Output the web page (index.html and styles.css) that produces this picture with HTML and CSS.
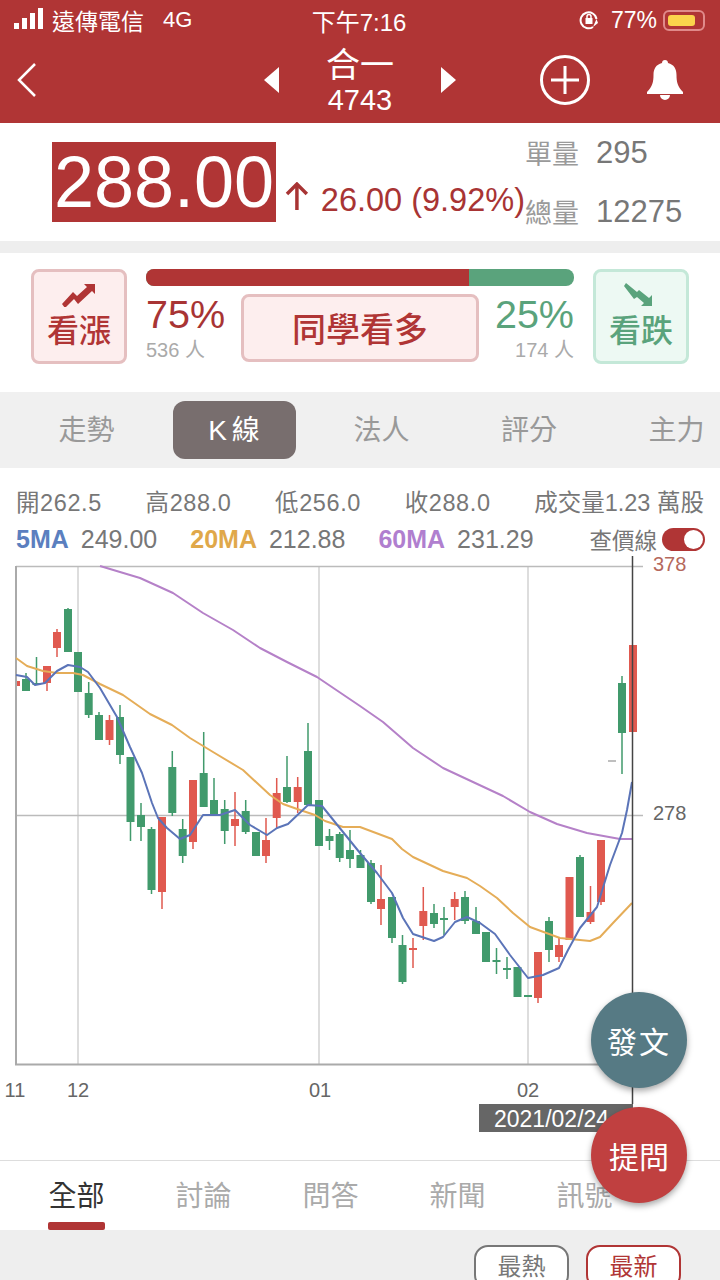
FILE: index.html
```html
<!DOCTYPE html>
<html lang="zh-Hant">
<head>
    <meta charset="UTF-8">
    <meta name="viewport" content="width=device-width, initial-scale=1.0">
    <title>合一 4743</title>
    <link rel="stylesheet" href="styles.css">
</head>
<body>
<div class="page">
    <header class="header">
        <div class="status-bar">
            <div class="status-left">
                <svg class="signal" width="32" height="22" viewBox="0 0 32 22"><path d="M1 15h5v6H1zM9 10h5v11H9zM17 5h5v16h-5zM25 0h5v21h-5z" fill="#fff"/></svg>
                <span class="carrier">遠傳電信</span>
                <span class="network">4G</span>
            </div>
            <div class="status-time">下午7:16</div>
            <div class="status-right">
                <svg width="20" height="22" viewBox="0 0 20 22" fill="none" stroke="#fff" stroke-width="2"><path d="M14 18a8 8 0 1 1 3.500-8"/><rect x="6.500" y="9" width="7" height="6" fill="#fff" stroke="none"/><path d="M8 9V7.500a2 2 0 0 1 4 0V9" stroke-width="1.500"/><path d="M14 18l3.500-8 1.500 4" stroke="none" fill="#fff"/></svg>
                <span class="battery-text">77%</span>
                <div class="battery"><div class="battery-fill"></div></div>
            </div>
        </div>
        <nav class="nav">
            <svg class="back" width="20" height="34" viewBox="0 0 20 34" fill="none" stroke="#fff" stroke-width="2.500"><path d="M18 1L2 17l16 16"/></svg>
            <div class="stock-switch">
                <svg width="17" height="26" viewBox="0 0 17 26"><path d="M16 0v26L1 13z" fill="#fff"/></svg>
                <div class="stock-name">
                    <div class="stock-title">合一</div>
                    <div class="stock-code">4743</div>
                </div>
                <svg width="17" height="26" viewBox="0 0 17 26"><path d="M1 0v26l15-13z" fill="#fff"/></svg>
            </div>
            <div class="nav-actions">
                <svg width="50" height="50" viewBox="0 0 50 50" fill="none" stroke="#fff"><circle cx="25" cy="25" r="23.500" stroke-width="3"/><path d="M25 11v28M11 25h28" stroke-width="3"/></svg>
                <svg width="38" height="40" viewBox="0 0 38 40"><path d="M19 0c1.800 0 3 1.200 3 3 6 1.500 8.500 6 8.500 12 0 7 1 11.500 6.500 17v2H1v-2c5.500-5.500 6.500-10 6.500-17 0-6 2.500-10.500 8.500-12 0-1.800 1.200-3 3-3zM14 35h10a5 5 0 0 1-10 0z" fill="#fff"/></svg>
            </div>
        </nav>
    </header>

    <section class="quote">
        <div class="price">288.00</div>
        <div class="change">
            <svg class="change-arrow" width="24" height="28" viewBox="0 0 24 28" fill="none" stroke="#a83434" stroke-width="3.500"><path d="M12 28V3M2 12l10-10 10 10"/></svg>
            <span>26.00 (9.92%)</span>
        </div>
        <div class="volumes">
            <div class="volume-row"><span class="volume-label">單量</span><span class="volume-value">295</span></div>
            <div class="volume-row"><span class="volume-label">總量</span><span class="volume-value">12275</span></div>
        </div>
    </section>

    <div class="divider"></div>

    <section class="sentiment">
        <button class="vote vote-up">
            <svg width="36" height="24" viewBox="0 0 36 24"><path d="M1 21l11-12 4 4 10-9-3-3h11v10l-3-3-14 13-4-5-9 9z" fill="#b03535"/></svg>
            <span>看漲</span>
        </button>
        <div class="sentiment-mid">
            <div class="ratio-bar"><div class="ratio-up"></div></div>
            <div class="sentiment-row">
                <div class="percent">
                    <div class="percent-num up">75%</div>
                    <div class="percent-people">536 人</div>
                </div>
                <div class="verdict">同學看多</div>
                <div class="percent percent-right">
                    <div class="percent-num down">25%</div>
                    <div class="percent-people">174 人</div>
                </div>
            </div>
        </div>
        <button class="vote vote-down">
            <svg width="36" height="24" viewBox="0 0 36 24"><path d="M3 0l11 9 2-2 10 8 3-3v11H18l3-3-7-6-3 2L1 3z" fill="#5aa37c"/></svg>
            <span>看跌</span>
        </button>
    </section>

    <div class="chart-tabs">
        <div class="chart-tab">走勢</div>
        <div class="chart-tab active">K 線</div>
        <div class="chart-tab">法人</div>
        <div class="chart-tab">評分</div>
        <div class="chart-tab">主力</div>
    </div>

    <section class="chart-info">
        <div class="ohlc">
            <span>開262.5</span>
            <span>高288.0</span>
            <span>低256.0</span>
            <span>收288.0</span>
            <span>成交量1.23 萬股</span>
        </div>
        <div class="ma-row">
            <b class="ma5">5MA</b><span class="ma-value">249.00</span>
            <b class="ma20">20MA</b><span class="ma-value">212.88</span>
            <b class="ma60">60MA</b><span class="ma-value">231.29</span>
            <span class="crosshair-label">查價線</span>
            <div class="toggle"><div class="toggle-knob"></div></div>
        </div>
    </section>

    <svg class="chart" width="720" height="604" viewBox="0 556 720 604">
        <!-- grid -->
        <path class="grid-v" d="M78 566V1065M319 566V1065M528 566V1065"/>
        <path class="grid-h" d="M16 566.500H643M16 815.500H643"/>
        <path class="axis" d="M16 566V1065M15 1064.500H632"/>

        <!-- candles: wicks, then bodies drawn as wide strokes -->
        <path class="wick green" d="M26 673V691M36.500 657V685M68 608V652M78 652V692M88.700 682V718M99 712V740M120 705V764M130.500 757V841M141 803V841M151.500 827V894M172.300 751V816M182.700 819V863M203.700 732V807M214 778V814M224.700 800V844M245.700 800V834M287 756V803M308 723V805M319 800V846M329.500 829V850M339.700 832V862M350 830V868M360.500 850V868M371 860V904M392 897V943M402.500 935V984M434 904V928M444 907V935M465 891V924M476 907V934M496.500 948V974M507 957V979M549 917V962M580 855V917M622 676V774"/>
        <path class="wick red" d="M47 666V691M57 629V657M109.500 715V745M162 817V909M193 780V849M235 792V846M266 818V863M276.700 778V828M297.700 777V813M381 865V925M413 938V968M423.300 887V940M454.700 892V920M538 952V1003M559 938V962M590.500 886V924M601 840V905"/>
        <path class="body green" d="M26 679V691M36.500 683V685M68 609V652M78 652V692M88.700 693V715M99 715V740M120 717V755M130.500 757V822M141 815V827M151.500 829V890M172.300 767V813M182.700 829V856M203.700 773V807M214 800V814M224.700 809V831M245.700 811V832M256 832V856M287 787V802M308 751V805M319 800V846M329.500 836V841M339.700 834V858M350 850V859M360.500 855V868M371 863V902M392 897V938M402.500 945V982M434 913V924M444 918V920M465 897V921M476 921V934M486 932V962M496.500 960V962M507 968V970M517.500 967V997M528 995V997M549 921V950M580 857V917M622 683V733"/>
        <path class="body red" d="M47 666V683M57 632V648M109.500 720V740M162 817V892M193 780V842M235 819V826M266 840V856M276.700 793V818M297.700 787V802M381 899V909M413 948V950M423.300 911V926M454.700 899V907M538 952V998M559 945V957M569.500 877V940M590.500 912V922M601 840V902M633 645V732"/>
        <rect class="candle-stub" x="17" y="681" width="3" height="5"/>
        <path class="body doji" d="M608 761H616"/>

        <!-- moving averages -->
        <polyline class="ma-line line-60" points="100,566 140,578 173,593 203,613 233,630 260,648 287,662 317,677 360,706 383,722 413,748 443,768 473,782 503,796 530,812 557,824 587,833 620,839 632,839"/>
        <polyline class="ma-line line-20" points="16,658 27,666 43,671 57,673 73,673 83,675 100,684 123,695 150,714 172,725 190,738 213,752 243,770 270,795 283,804 300,810 315,815 325,821 343,827 360,827 392,839 402,849 413,857 443,871 467,878 480,886 497,898 513,913 530,927 560,938 590,941 600,937 613,923 632,903"/>
        <polyline class="ma-line line-5" points="16,675 27,677 35,685 45,683 57,671 68,665 80,667 88,672 100,688 117,717 130,747 142,773 152,803 158,818 167,828 180,839 190,835 203,815 220,815 235,810 250,825 267,835 277,828 288,824 308,805 322,806 343,832 360,853 377,873 392,893 403,918 413,934 434,941 443,937 455,922 467,917 480,923 495,934 510,955 528,978 543,975 559,968 568,950 580,928 597,907 610,865 622,833 627,810 632,782"/>

        <!-- crosshair -->
        <path class="crosshair" d="M632.500 556V1104"/>
        <text class="axis-label high" x="653" y="571">378</text>
        <text class="axis-label" x="653" y="820">278</text>
        <text class="axis-label" x="15" y="1097" text-anchor="middle">11</text>
        <text class="axis-label" x="78" y="1097" text-anchor="middle">12</text>
        <text class="axis-label" x="320" y="1097" text-anchor="middle">01</text>
        <text class="axis-label" x="528" y="1097" text-anchor="middle">02</text>
        <rect class="date-box" x="479" y="1104" width="154" height="28"/>
        <text class="date-text" x="494" y="1127">2021/02/24</text>
    </svg>

    <div class="feed-tabs">
        <div class="feed-tab active">全部</div>
        <div class="feed-tab">討論</div>
        <div class="feed-tab">問答</div>
        <div class="feed-tab">新聞</div>
        <div class="feed-tab">訊號</div>
    </div>

    <div class="feed-sort">
        <button class="sort-btn">最熱</button>
        <button class="sort-btn selected">最新</button>
    </div>

    <button class="fab fab-post">發文</button>
    <button class="fab fab-ask">提問</button>
</div>
</body>
</html>
```

FILE: styles.css
```css
* {
    box-sizing: border-box;
    margin: 0;
    padding: 0;
}

body {
    font-family: "Liberation Sans", "Noto Sans CJK TC", sans-serif;
    background: #fff;
}

button {
    font-family: inherit;
    cursor: pointer;
}

.page {
    position: relative;
    width: 720px;
    height: 1280px;
    overflow: hidden;
}

/* header */
.header {
    height: 123px;
    background: #b03535;
    color: #fff;
}

.status-bar {
    display: grid;
    grid-template-columns: 1fr auto 1fr;
    align-items: center;
    height: 40px;
    padding: 0 15px 0 13px;
    font-size: 23px;
}

.status-left {
    display: flex;
    align-items: center;
}

.signal {
    margin-right: 7px;
    margin-top: -3px;
}

.network {
    margin-left: 19px;
    font-size: 22px;
}

.status-time {
    font-size: 24px;
}

.status-right {
    display: flex;
    align-items: center;
    justify-content: flex-end;
    gap: 6px;
}

.battery-text {
    margin-left: 6px;
}

.battery {
    width: 42px;
    height: 21px;
    padding: 3px;
    border: 2px solid #e08a8a;
    border-radius: 6px;
}

.battery-fill {
    width: 27px;
    height: 100%;
    background: #fbd44c;
    border-radius: 3px;
}

.nav {
    display: grid;
    grid-template-columns: 1fr auto 1fr;
    align-items: center;
    height: 83px;
    padding: 0 36px 3px;
}

.back {
    margin-left: -19px;
}

.stock-switch {
    display: flex;
    align-items: center;
    gap: 46px;
}

.stock-name {
    text-align: center;
}

.stock-title {
    font-size: 34px;
    line-height: 40px;
}

.stock-code {
    font-size: 29px;
    line-height: 30px;
}

.nav-actions {
    display: flex;
    align-items: center;
    justify-content: flex-end;
    gap: 56px;
}

/* price block */
.quote {
    display: flex;
    height: 118px;
    padding-left: 52px;
}

.price {
    width: 224px;
    height: 80px;
    margin-top: 19px;
    background: #b03535;
    color: #fff;
    font-size: 72px;
    line-height: 80px;
    text-align: center;
}

.change {
    display: flex;
    align-items: center;
    gap: 12px;
    width: 249px;
    height: 40px;
    margin-top: 57px;
    padding-left: 9px;
    color: #a83434;
    font-size: 32.500px;
    white-space: nowrap;
}

.change-arrow {
    margin-top: -9px;
}

.volume-row {
    display: flex;
    align-items: center;
    height: 59px;
}

.volume-label {
    width: 71px;
    color: #9a9a9a;
    font-size: 27px;
}

.volume-value {
    color: #777;
    font-size: 31px;
}

.divider {
    height: 12px;
    background: #eee;
}

/* bull / bear vote */
.sentiment {
    display: flex;
    gap: 19px;
    height: 139px;
    padding: 16px 31px 0;
}

.vote {
    display: flex;
    flex-direction: column;
    align-items: center;
    justify-content: flex-start;
    gap: 5px;
    width: 96px;
    height: 95px;
    padding-top: 11px;
    border: 3px solid #e5bfc0;
    border-radius: 8px;
    background: #fdeeee;
    color: #b03535;
    font-size: 32px;
    font-weight: 500;
    line-height: 38px;
}

.vote-down {
    border-color: #c4e8d8;
    background: #edf9f3;
    color: #5aa37c;
}

.sentiment-mid {
    flex: 1;
}

.ratio-bar {
    height: 17px;
    background: #5aa37c;
    border-radius: 8px;
    overflow: hidden;
}

.ratio-up {
    width: 75.500%;
    height: 100%;
    background: #b03535;
}

.sentiment-row {
    display: flex;
    justify-content: space-between;
    margin-top: 8px;
}

.percent-num {
    font-size: 39.500px;
    line-height: 40px;
}

.percent-num.up {
    color: #a83434;
}

.percent-num.down {
    color: #5aa37c;
}

.percent-people {
    color: #aaa;
    font-size: 20px;
}

.percent-right {
    text-align: right;
}

.verdict {
    width: 238px;
    height: 68px;
    border: 3px solid #e5bfc0;
    border-radius: 8px;
    background: #fdeeee;
    color: #b03535;
    font-size: 34px;
    font-weight: 500;
    line-height: 66px;
    text-align: center;
}

/* chart tabs */
.chart-tabs {
    display: flex;
    height: 76px;
    padding: 9px 0 0 25px;
    background: #f0f0f0;
    overflow: hidden;
}

.chart-tab {
    flex: 0 0 123px;
    height: 58px;
    margin-right: 24.500px;
    color: #999;
    font-size: 28px;
    line-height: 60px;
    text-align: center;
}

.chart-tab.active {
    background: #786e6e;
    border-radius: 12px;
    color: #fff;
    word-spacing: -3px;
}

/* OHLC rows */
.chart-info {
    height: 88px;
    padding: 20px 16px 0;
    color: #777;
    font-size: 23.500px;
}

.ohlc {
    display: flex;
    justify-content: space-between;
    line-height: 30px;
}

.ohlc span:not(:last-child) {
    letter-spacing: 0.600px;
}

.ma-row {
    display: flex;
    align-items: center;
    height: 30px;
    margin-top: 6px;
    font-size: 25px;
}

.ma-value {
    margin-left: 12px;
    margin-right: 33px;
}

.ma5 {
    color: #5b7fbf;
}

.ma20 {
    color: #e0a84a;
}

.ma60 {
    color: #b07fcf;
}

.crosshair-label {
    margin-left: auto;
    font-size: 22.500px;
}

.toggle {
    display: flex;
    justify-content: flex-end;
    align-items: center;
    width: 43px;
    height: 23px;
    margin-left: 5px;
    margin-right: -1px;
    padding-right: 2px;
    background: #b03535;
    border-radius: 12px;
}

.toggle-knob {
    width: 19px;
    height: 19px;
    background: #fff;
    border-radius: 50%;
}

/* chart */
.chart {
    display: block;
    overflow: visible;
}

.grid-v {
    stroke: #ddd;
    stroke-width: 2;
    fill: none;
}

.grid-h {
    stroke: #bbb;
    stroke-width: 1.500;
    fill: none;
}

.axis {
    stroke: #aaa;
    stroke-width: 2;
    fill: none;
}

.wick {
    stroke-width: 1.500;
    fill: none;
}

.body {
    stroke-width: 8;
    fill: none;
}

.wick.green, .body.green {
    stroke: #419a6c;
}

.wick.red, .body.red {
    stroke: #e0594f;
}

.candle-stub {
    fill: #e0594f;
}

.body.doji {
    stroke: #aaa;
    stroke-width: 1.500;
}

.ma-line {
    fill: none;
    stroke-width: 2;
    stroke-linejoin: round;
}

.line-5 {
    stroke: #5b74b8;
}

.line-20 {
    stroke: #e5ad58;
}

.line-60 {
    stroke: #b581c8;
}

.crosshair {
    stroke: #444;
    stroke-width: 1.500;
    fill: none;
}

.axis-label {
    fill: #666;
    font-size: 20px;
}

.axis-label.high {
    fill: #b5685c;
}

.date-box {
    fill: #666;
}

.date-text {
    fill: #fff;
    font-size: 23px;
}

/* feed */
.feed-tabs {
    display: flex;
    height: 70px;
    padding-left: 13px;
    border-top: 1px solid #ddd;
}

.feed-tab {
    position: relative;
    flex: 0 0 127px;
    padding-top: 16px;
    color: #aaa;
    font-size: 28px;
    line-height: 40px;
    text-align: center;
}

.feed-tab.active {
    color: #333;
}

.feed-tab.active::after {
    content: "";
    position: absolute;
    left: 35px;
    bottom: 0;
    width: 57px;
    height: 8px;
    background: #b03535;
    border-radius: 2px;
}

.feed-sort {
    display: flex;
    justify-content: flex-end;
    gap: 17px;
    height: 60px;
    padding: 15px 39px 0 0;
    background: #eee;
}

.sort-btn {
    width: 95px;
    height: 44px;
    border: 2px solid #777;
    border-radius: 14px;
    background: #fff;
    color: #777;
    font-size: 24px;
    line-height: 24px;
}

.sort-btn.selected {
    border-color: #b03535;
    color: #b03535;
}

.fab {
    position: absolute;
    left: 591px;
    width: 96px;
    height: 96px;
    border: none;
    border-radius: 50%;
    box-shadow: 0 3px 6px rgba(0,0,0,0.35);
    color: #fff;
    font-size: 30px;
}

.fab-post {
    top: 992px;
    background: #567a84;
    letter-spacing: 2px;
}

.fab-ask {
    top: 1107px;
    background: #c04040;
}
```
